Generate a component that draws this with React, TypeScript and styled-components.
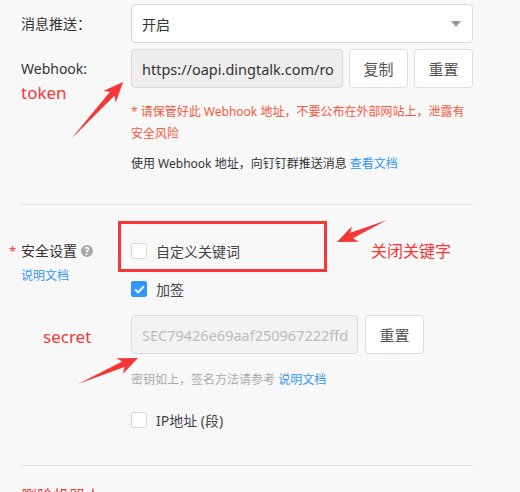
import React from "react";
import styled, { createGlobalStyle } from "styled-components";

const Global = createGlobalStyle`
  html, body { margin: 0; padding: 0; background: #f8f8f8; }
  * { box-sizing: border-box; }
`;

const FONT = `"Segoe UI", "Noto Sans", "Noto Sans CJK SC", sans-serif`;

const Page = styled.div`
  position: relative;
  width: 520px;
  height: 492px;
  overflow: hidden;
  background: #f8f8f8;
  font-family: ${FONT};
  color: #333;
`;

const Form = styled.div`
  padding: 4px 47px 0 21px;
`;

const Row = styled.div<{ $mt?: number }>`
  display: flex;
  margin-top: ${(p) => p.$mt ?? 0}px;
`;

const LabelCol = styled.div`
  width: 110px;
  flex: none;
  display: flex;
  flex-direction: column;
`;

const Label = styled.div<{ $lh?: number }>`
  font-size: 14px;
  line-height: ${(p) => p.$lh ?? 39}px;
  color: #333;
  display: flex;
  align-items: center;
  white-space: nowrap;
`;

const Required = styled.span`
  color: #f04134;
  width: 12px;
  margin-left: -12px;
  font-size: 13px;
`;

const HelpIcon = styled.span`
  display: inline-flex;
  align-items: center;
  justify-content: center;
  width: 12px;
  height: 12px;
  border-radius: 50%;
  background: #a8a8a8;
  color: #fff;
  font-size: 10px;
  font-weight: bold;
  line-height: 1;
  margin-left: 4px;
`;

const Annotation = styled.div<{ $mt?: number; $ml?: number; $size?: number }>`
  color: #f53737;
  font-size: ${(p) => p.$size ?? 17}px;
  line-height: 22px;
  margin-top: ${(p) => p.$mt ?? 0}px;
  margin-left: ${(p) => p.$ml ?? 0}px;
  white-space: nowrap;
`;

const Link = styled.a<{ $mt?: number; $size?: number }>`
  color: #3296fa;
  text-decoration: none;
  font-size: ${(p) => (p.$size ? `${p.$size}px` : "inherit")};
  line-height: 22px;
  margin-top: ${(p) => p.$mt ?? 0}px;
`;

const ContentCol = styled.div`
  flex: 1;
  display: flex;
  flex-direction: column;
  min-width: 0;
`;

const Select = styled.div`
  height: 39px;
  background: #fff;
  border: 1px solid #d9d9d9;
  border-radius: 4px;
  display: flex;
  align-items: center;
  justify-content: space-between;
  padding: 0 11px 0 10px;
  font-size: 14px;
  color: #333;
`;

const Caret = styled.span`
  width: 0;
  height: 0;
  border-left: 5px solid transparent;
  border-right: 5px solid transparent;
  border-top: 6px solid #999;
`;

const Group = styled.div<{ $mt?: number; $gap?: number }>`
  display: flex;
  gap: ${(p) => p.$gap ?? 6}px;
  margin-top: ${(p) => p.$mt ?? 0}px;
`;

const Input = styled.div<{ $w: number; $bg: string; $color: string }>`
  width: ${(p) => p.$w}px;
  height: 39px;
  flex: none;
  background: ${(p) => p.$bg};
  border: 1px solid #d9d9d9;
  border-radius: 4px;
  padding: 0 3px 0 10px;
  display: flex;
  align-items: center;
  font-size: 14.5px;
  color: ${(p) => p.$color};
`;

const InputValue = styled.span`
  display: block;
  flex: 1;
  min-width: 0;
  overflow: hidden;
  white-space: nowrap;
`;

const Button = styled.div`
  width: 59px;
  height: 39px;
  flex: none;
  background: #fff;
  border: 1px solid #ddd;
  border-radius: 4px;
  display: flex;
  align-items: center;
  justify-content: center;
  font-size: 15px;
  color: #555;
`;

const Text = styled.div<{ $mt?: number; $color?: string; $size?: number }>`
  margin-top: ${(p) => p.$mt ?? 0}px;
  color: ${(p) => p.$color ?? "#333"};
  font-size: ${(p) => p.$size ?? 12}px;
  line-height: 22px;
  white-space: nowrap;
`;

const Divider = styled.div<{ $mt: number }>`
  margin-top: ${(p) => p.$mt}px;
  height: 1px;
  background: #e3e3e3;
`;

const CheckRow = styled.label<{ $mt?: number }>`
  position: relative;
  display: flex;
  align-items: center;
  gap: 9px;
  height: 22px;
  margin-top: ${(p) => p.$mt ?? 0}px;
  font-size: 14px;
  color: #444;
`;

const Box = styled.span<{ $checked?: boolean }>`
  width: 16px;
  height: 16px;
  border-radius: 2px;
  border: 1px solid ${(p) => (p.$checked ? "#3296fa" : "#d9d9d9")};
  background: ${(p) => (p.$checked ? "#3296fa" : "#fff")};
  display: inline-flex;
  align-items: center;
  justify-content: center;
`;

const RedBox = styled.div`
  position: absolute;
  left: -13px;
  top: -19px;
  width: 209px;
  height: 51px;
  border: 3px solid #f53737;
`;

const SideNote = styled.div`
  position: absolute;
  left: 240px;
  top: 0;
  color: #f53737;
  font-size: 16px;
  line-height: 22px;
  white-space: nowrap;
`;

const Overlay = styled.svg`
  position: absolute;
  left: 0;
  top: 0;
  pointer-events: none;
`;

const Check = () => (
  <svg width="11" height="9" viewBox="0 0 11 9">
    <path d="M1.2 4.6 L4.2 7.4 L9.8 1.4" stroke="#fff" strokeWidth="2" fill="none" />
  </svg>
);

function arrow(x1: number, y1: number, x2: number, y2: number, headLen = 20, headW = 17, shaftW = 6) {
  const dx = x2 - x1;
  const dy = y2 - y1;
  const len = Math.hypot(dx, dy);
  const ux = dx / len;
  const uy = dy / len;
  const nx = -uy;
  const ny = ux;
  const bx = x2 - ux * headLen;
  const by = y2 - uy * headLen;
  const nbx = x2 - ux * (headLen - 4);
  const nby = y2 - uy * (headLen - 4);
  const pts = [
    [x1, y1],
    [nbx + (nx * shaftW) / 2, nby + (ny * shaftW) / 2],
    [bx + (nx * headW) / 2, by + (ny * headW) / 2],
    [x2, y2],
    [bx - (nx * headW) / 2, by - (ny * headW) / 2],
    [nbx - (nx * shaftW) / 2, nby - (ny * shaftW) / 2],
  ];
  return pts.map((p) => p.map((v) => v.toFixed(1)).join(",")).join(" ");
}

export default function App() {
  return (
    <>
      <Global />
      <Page>
        <Form>
          <Row>
            <LabelCol>
              <Label>消息推送：</Label>
            </LabelCol>
            <ContentCol>
              <Select>
                <span>开启</span>
                <Caret />
              </Select>
            </ContentCol>
          </Row>

          <Row $mt={6}>
            <LabelCol>
              <Label>Webhook:</Label>
              <Annotation $mt={-6}>token</Annotation>
            </LabelCol>
            <ContentCol>
              <Group>
                <Input $w={212} $bg="#eeeeee" $color="#333">
                  <InputValue>https://oapi.dingtalk.com/ro</InputValue>
                </Input>
                <Button>复制</Button>
                <Button>重置</Button>
              </Group>
              <Text $mt={13} $color="#f5583d">
                * 请保管好此 Webhook 地址，不要公布在外部网站上，泄露有
                <br />
                安全风险
              </Text>
              <Text $mt={8}>
                使用 Webhook 地址，向钉钉群推送消息 <Link href="#">查看文档</Link>
              </Text>
            </ContentCol>
          </Row>

          <Divider $mt={29} />

          <Row $mt={35}>
            <LabelCol>
              <Label $lh={22}>
                <Required>*</Required>
                安全设置
                <HelpIcon>?</HelpIcon>
              </Label>
              <Link href="#" $mt={3} $size={12}>说明文档</Link>
              <Annotation $mt={39} $ml={22}>secret</Annotation>
            </LabelCol>
            <ContentCol>
              <CheckRow>
                <Box />
                自定义关键词
                <RedBox />
                <SideNote>关闭关键字</SideNote>
              </CheckRow>
              <CheckRow $mt={16}>
                <Box $checked>
                  <Check />
                </Box>
                加签
              </CheckRow>
              <Group $mt={15} $gap={7}>
                <Input $w={227} $bg="#f3f3f3" $color="#bbb">
                  <InputValue>SEC79426e69aaf250967222ffd</InputValue>
                </Input>
                <Button>重置</Button>
              </Group>
              <Text $mt={15} $color="#aaa" $size={12}>
                密钥如上，签名方法请参考 <Link href="#">说明文档</Link>
              </Text>
              <CheckRow $mt={18}>
                <Box />
                IP地址 (段)
              </CheckRow>
            </ContentCol>
          </Row>

          <Divider $mt={34} />
          <Annotation $mt={19} $size={16}>删除机器人</Annotation>
        </Form>

        <Overlay width="520" height="492" viewBox="0 0 520 492">
          <polygon points={arrow(71, 139, 123, 82)} fill="#f53737" />
          <polygon points={arrow(387, 220, 337, 242)} fill="#f53737" />
          <polygon points={arrow(78, 384, 138, 358)} fill="#f53737" />
        </Overlay>
      </Page>
    </>
  );
}
